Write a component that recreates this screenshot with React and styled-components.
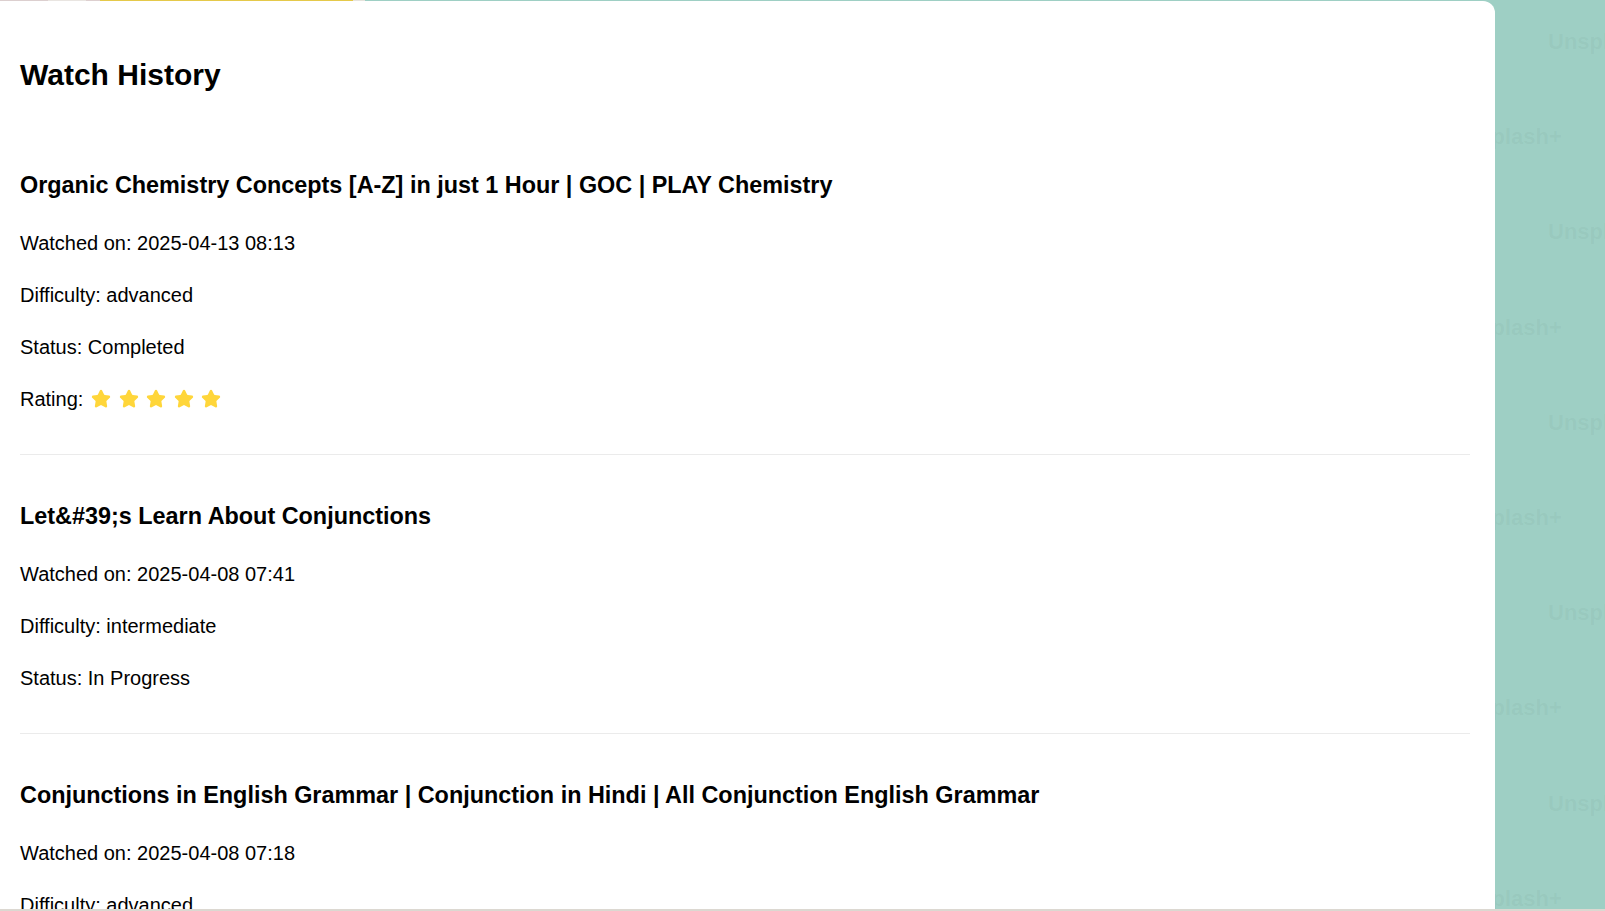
import styled, { createGlobalStyle } from "styled-components";
import { Star } from "lucide-react";

const GlobalStyle = createGlobalStyle`
  html, body {
    margin: 0;
    padding: 0;
  }
  body {
    font-family: "Liberation Sans", Arial, sans-serif;
    color: #000;
    background-color: #9ecfc4;
    background-image: linear-gradient(
      to right,
      #dccfcf 0, #dccfcf 48px,
      #e9e5e1 48px, #e9e5e1 86px,
      #ddcfcf 86px, #ddcfcf 100px,
      #e5c94a 100px, #e5c94a 353px,
      #e6e3dc 353px, #e6e3dc 365px,
      #9ecfc4 365px
    );
    background-size: 100% 1px;
    background-repeat: no-repeat;
  }
`;

const Page = styled.div`
  display: flex;
  padding-top: 1px;
  min-height: 100vh;
  box-sizing: border-box;
`;

const Card = styled.main`
  flex: none;
  width: 1495px;
  box-sizing: border-box;
  background: #fff;
  border-radius: 0 12px 0 0;
  padding: 50px 25px 0 20px;
`;

const Title = styled.h1`
  margin: 0 0 25px;
  font-size: 30px;
  line-height: 48px;
  font-weight: 700;
`;

const Item = styled.section`
  padding: 20px 0 19px;
  border-bottom: 1px solid #ebebeb;
`;

const VideoTitle = styled.h3`
  margin: 23px 0 22.5px;
  font-size: 23.4px;
  line-height: 37.4px;
  font-weight: 700;
`;

const Line = styled.p`
  margin: 0 0 20px;
  font-size: 20px;
  line-height: 32px;
`;

const RatingLine = styled(Line)`
  display: flex;
  align-items: center;
`;

const Stars = styled.span`
  display: inline-flex;
  gap: 7.5px;
  margin-left: 8px;
  color: #ffd63a;
`;

const Aside = styled.aside`
  flex: 1;
  overflow: hidden;
  margin-top: -7px;
`;

const Mark = styled.div`
  height: 95.2px;
  line-height: 95.2px;
  white-space: nowrap;
  padding-left: ${(p) => (p.$shift ? "0" : "53px")};
  margin-left: ${(p) => (p.$shift ? "-45px" : "0")};
  font-size: 22px;
  font-weight: 700;
  color: rgba(80, 120, 110, 0.07);
`;

const BottomEdge = styled.div`
  position: fixed;
  left: 0;
  right: 0;
  bottom: 0;
  height: 2px;
  background: #dcd8d1;
`;

const history = [
  {
    title: "Organic Chemistry Concepts [A-Z] in just 1 Hour | GOC | PLAY Chemistry",
    watched: "2025-04-13 08:13",
    difficulty: "advanced",
    status: "Completed",
    rating: 5,
  },
  {
    title: "Let&#39;s Learn About Conjunctions",
    watched: "2025-04-08 07:41",
    difficulty: "intermediate",
    status: "In Progress",
  },
  {
    title: "Conjunctions in English Grammar | Conjunction in Hindi | All Conjunction English Grammar",
    watched: "2025-04-08 07:18",
    difficulty: "advanced",
    status: "Completed",
  },
];

const App = () => {
  return (
    <>
      <GlobalStyle />
      <Page>
        <Card>
          <Title>Watch History</Title>
          {history.map((h) => (
            <Item key={h.watched}>
              <VideoTitle>{h.title}</VideoTitle>
              <Line>Watched on: {h.watched}</Line>
              <Line>Difficulty: {h.difficulty}</Line>
              <Line>Status: {h.status}</Line>
              {h.rating ? (
                <RatingLine>
                  Rating:
                  <Stars>
                    {Array.from({ length: h.rating }).map((_, i) => (
                      <Star key={i} size={20} fill="currentColor" strokeWidth={2} />
                    ))}
                  </Stars>
                </RatingLine>
              ) : null}
            </Item>
          ))}
        </Card>
        <Aside>
          {Array.from({ length: 10 }).map((_, i) => (
            <Mark key={i} $shift={i % 2 === 1}>Unsplash+</Mark>
          ))}
        </Aside>
      </Page>
      <BottomEdge />
    </>
  );
};

export default App;
